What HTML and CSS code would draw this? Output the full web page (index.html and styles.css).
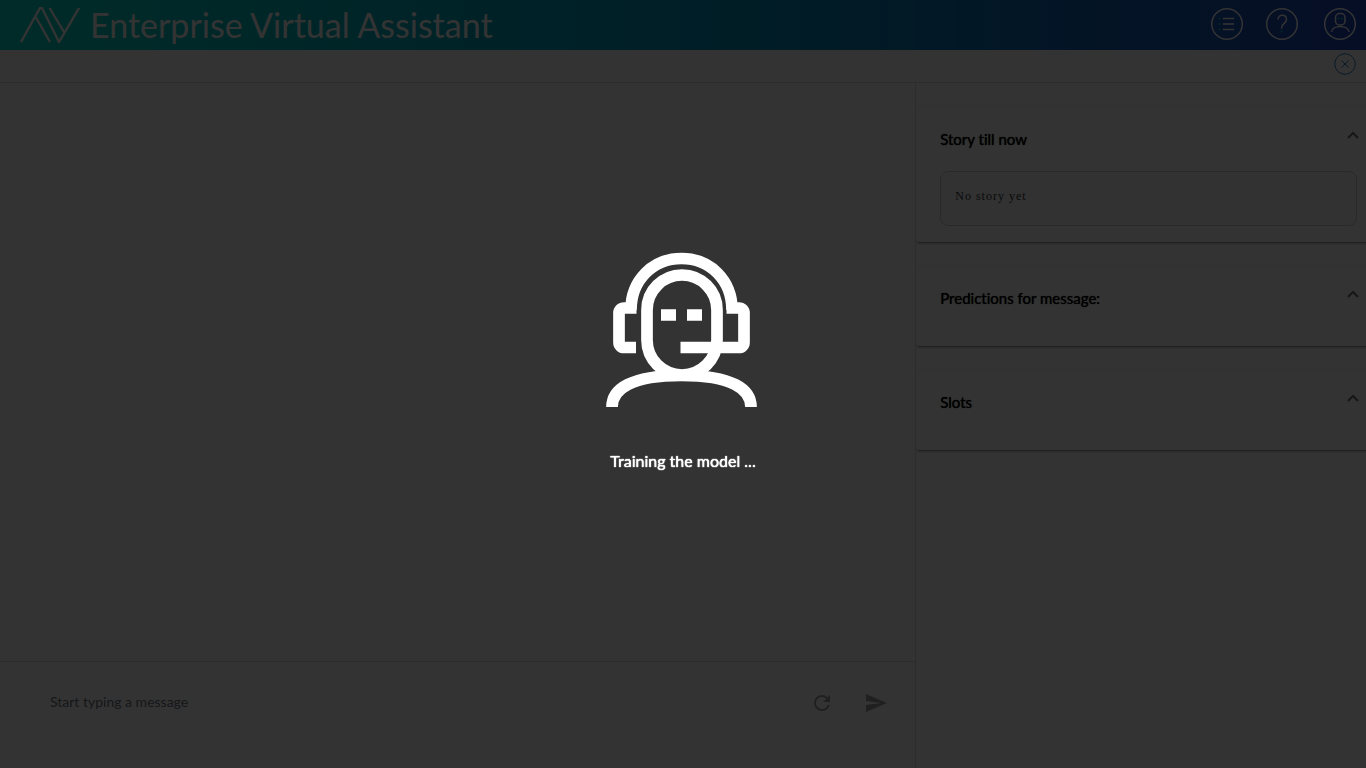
FILE: index.html
```html
<!DOCTYPE html>
<html lang="en">
<head>
<meta charset="utf-8">
<title>Enterprise Virtual Assistant</title>
<link rel="stylesheet" href="styles.css">
</head>
<body>
<div class="app">
  <header class="topbar">
    <svg class="logo" width="60" height="36" viewBox="0 0 60 36" fill="none" stroke="currentColor" stroke-width="2.4"><path d="M1 35 20 1h2L39 35 59 1M16 10.500 30 35M29.500 1 44 25"/></svg>
    <h1 class="brand">Enterprise Virtual Assistant</h1>
    <nav class="tools" aria-label="Main">
      <button class="tool" aria-label="Menu"><svg width="34" height="34" viewBox="0 0 34 34" fill="none" stroke="currentColor" stroke-width="1.5"><circle cx="17" cy="17" r="15.3"/><path d="M13 11.500h11M13 17h11M13 22.500h11"/><path class="accent" d="M8.500 11.500h2M8.500 17h2M8.500 22.500h2"/></svg></button>
      <button class="tool" aria-label="Help"><svg width="34" height="34" viewBox="0 0 34 34" fill="none" stroke="currentColor" stroke-width="1.5"><circle cx="17" cy="17" r="15.3"/><path d="M13 12.500C13 6.500 21.500 7 21.500 12.500C21.500 16.500 16.500 16 16.500 21.500"/><path class="accent" d="M16.500 23.500v2"/></svg></button>
      <button class="tool tool-user" aria-label="Account"><svg width="34" height="34" viewBox="0 0 34 34" fill="none" stroke="currentColor" stroke-width="1.5"><circle cx="17" cy="17" r="15.3"/><rect x="12.500" y="6.500" width="9.500" height="11.500" rx="4"/><path d="M8.500 25C9 17.500 25.500 17.500 26 25"/><path class="accent" d="M14.500 11.500h2M18 11.500h2"/></svg></button>
    </nav>
  </header>
  <div class="subbar">
    <button class="close" aria-label="Close"><svg width="22" height="22" viewBox="0 0 22 22" fill="none" stroke="currentColor"><circle cx="11" cy="11" r="10.3"/><path d="M7.500 7.500l7 7M14.500 7.500l-7 7"/></svg></button>
  </div>
  <div class="workspace">
    <main class="chat">
      <div class="messages"></div>
      <form class="composer">
        <input class="message" type="text" placeholder="Start typing a message" aria-label="Message">
        <button class="action" type="button" aria-label="Restart"><svg width="24" height="24" viewBox="0 0 24 24" fill="currentColor"><path d="M17.650 6.350A7.958 7.958 0 0 0 12 4a8 8 0 1 0 7.730 10h-2.080A5.990 5.990 0 0 1 12 18a6 6 0 1 1 4.220-10.220L13 11h7V4z"/></svg></button>
        <button class="action" type="button" aria-label="Send"><svg width="24" height="24" viewBox="0 0 24 24" fill="currentColor"><path d="M2.010 21 23 12 2.010 3 2 10l15 2-15 2z"/></svg></button>
      </form>
    </main>
    <aside class="details">
      <section class="panel">
        <div class="panel-head"><h2>Story till now</h2><button class="toggle" aria-label="Collapse story"><svg width="12" height="8" viewBox="0 0 12 8" fill="none" stroke="currentColor" stroke-width="2"><path d="M1 7 6 2l5 5"/></svg></button></div>
        <div class="story">No story yet</div>
      </section>
      <section class="panel">
        <div class="panel-head"><h2>Predictions for message:</h2><button class="toggle" aria-label="Collapse predictions"><svg width="12" height="8" viewBox="0 0 12 8" fill="none" stroke="currentColor" stroke-width="2"><path d="M1 7 6 2l5 5"/></svg></button></div>
      </section>
      <section class="panel">
        <div class="panel-head"><h2>Slots</h2><button class="toggle" aria-label="Collapse slots"><svg width="12" height="8" viewBox="0 0 12 8" fill="none" stroke="currentColor" stroke-width="2"><path d="M1 7 6 2l5 5"/></svg></button></div>
      </section>
    </aside>
  </div>
</div>
<div class="overlay" role="status">
  <svg width="154" height="156" viewBox="0 0 154 156" fill="none" stroke="#fff" stroke-width="11.7">
    <path d="M30 95.500H18a5 5 0 0 1-5-5V61a5 5 0 0 1 5-5H30.500M25 58C25 28 47 6.500 75.500 6.500S126 28 126 58M120.500 56H133a5 5 0 0 1 5 5V90.500a5 5 0 0 1-5 5H74.500"/>
    <rect x="41" y="23" width="70" height="100" rx="35"/>
    <path d="M6 155C6 137 25 123.500 75.500 123.500S145 137 145 155"/>
    <path d="M55 63h15M81 63h15"/>
  </svg>
  <p class="status">Training the model ...</p>
</div>
</body>
</html>
```
FILE: styles.css
```css
* { box-sizing: border-box; }
body { margin: 0; font-family: Lato, "Liberation Sans", sans-serif; font-variant-ligatures: none; background: #fff; }
button { padding: 0; border: 0; background: none; color: inherit; display: flex; }
h1, h2, p { margin: 0; font-weight: 400; }
.app { display: flex; flex-direction: column; height: 100vh; }
.topbar { display: flex; align-items: center; height: 50px; padding: 0 9px 0 20px; color: #fff; background: linear-gradient(90deg, #00d8c8, #0098c0 50%, #2044b8); }
.brand { margin-left: 10px; font-size: 34px; line-height: 50px; }
.tools { display: flex; gap: 21px; margin-left: auto; padding-bottom: 2px; }
.tool-user { margin-left: 3px; }
.accent { stroke: #00d8c8; }
.subbar { display: flex; justify-content: flex-end; height: 33px; padding: 3px 10px 0; border-bottom: 1px solid #ddd; }
.close { color: #2c80c8; align-self: flex-start; }
.workspace { flex: 1; display: flex; min-height: 0; }
.chat { width: 67%; display: flex; flex-direction: column; }
.messages { flex: 1; }
.composer { display: flex; align-items: center; gap: 30px; height: 107px; padding: 0 27px 24px 50px; border-top: 1px solid #ddd; }
.message { flex: 1; min-width: 0; padding: 0 0 2px; border: 0; outline: 0; background: none; font: 14px/20px Lato, sans-serif; }
.message::placeholder { color: #6c757d; opacity: 1; }
.action { color: #a0a0a0; }
.details { flex: 1; min-width: 0; padding-top: 24px; display: flex; flex-direction: column; gap: 24px; overflow: hidden; border-left: 1px solid #ddd; }
.panel { min-height: 80px; margin-right: -4px; padding: 24px 13px 16px 24px; border-radius: 4px; box-shadow: 0 3px 1px -2px rgba(0,0,0,.2), 0 2px 2px rgba(0,0,0,.14), 0 1px 5px rgba(0,0,0,.12); }
.panel-head { display: flex; justify-content: space-between; align-items: flex-start; height: 40px; }
.panel h2 { font-size: 15px; line-height: 16px; text-shadow: 0 0 1px currentColor; }
.toggle { margin-right: -2px; color: #707070; }
.story { height: 55px; padding: 15px 14px; border: 1px solid #ccc; border-radius: 8px; background: #f8f8f8; font: 12px/18px "Liberation Serif", serif; letter-spacing: 1px; color: #343a40; }
.overlay { position: fixed; inset: 0; display: flex; flex-direction: column; align-items: center; padding-top: 252px; background: rgba(0,0,0,.8); color: #fff; }
.status { margin-top: 43px; font-size: 16px; line-height: 20px; text-shadow: 0 0 1px currentColor, 0 0 1px currentColor; }
```
